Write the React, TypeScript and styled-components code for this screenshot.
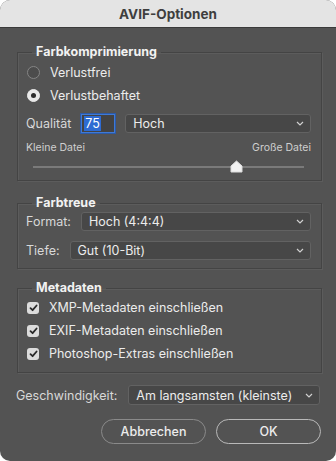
import React from "react";
import styled, { createGlobalStyle } from "styled-components";

const GlobalStyle = createGlobalStyle`
  html, body {
    margin: 0;
    padding: 0;
    background: #ffffff;
  }
  body {
    font-family: Inter, "Liberation Sans", sans-serif;
  }
`;

const Dialog = styled.div`
  width: 336px;
  height: 461px;
  background: #535353;
  border-radius: 10px;
  overflow: hidden;
  display: flex;
  flex-direction: column;
`;

const TitleBar = styled.div`
  height: 28px;
  flex: none;
  box-sizing: border-box;
  background: #e4e4e4;
  border-bottom: 1px solid #3a3a3a;
  display: flex;
  align-items: center;
  justify-content: center;
  font-size: 13.5px;
  font-weight: 700;
  color: #3e3e3e;
`;

const Body = styled.div`
  display: flex;
  flex-direction: column;
  padding-top: 16px;
`;

const Group = styled.fieldset<{ $top?: number; $bottom: number }>`
  margin: ${(p) => p.$top ?? 0}px 14px 0 17px;
  padding: 0 10px ${(p) => p.$bottom}px 8px;
  border: 1px solid #444444;
  box-shadow: inset 1px 1px 0 #5c5c5c, 1px 1px 0 #5c5c5c;
  min-width: 0;
  display: flex;
  flex-direction: column;
`;

const Legend = styled.legend`
  margin-left: 6px;
  padding: 0 4px;
  font-size: 12.5px;
  font-weight: 700;
  line-height: 16px;
  color: #f2f2f2;
`;

const OptionRow = styled.label<{ $h: number }>`
  height: ${(p) => p.$h}px;
  display: flex;
  align-items: center;
  gap: 10px;
  font-size: 12.5px;
  color: #ececec;
  padding-left: 1px;
`;

const RadioDot = styled.span<{ $on?: boolean }>`
  width: 13px;
  height: 13px;
  box-sizing: border-box;
  border-radius: 50%;
  flex: none;
  display: flex;
  align-items: center;
  justify-content: center;
  background: ${(p) => (p.$on ? "#e9e9e9" : "#4c4c4c")};
  border: 1px solid ${(p) => (p.$on ? "#e9e9e9" : "#858585")};
  &::after {
    content: "";
    width: 5px;
    height: 5px;
    border-radius: 50%;
    background: #2c2c2c;
    display: ${(p) => (p.$on ? "block" : "none")};
  }
`;

const CheckBox = styled.span`
  width: 12px;
  height: 12px;
  border-radius: 3px;
  flex: none;
  background: #dcdcdc;
  display: flex;
  align-items: center;
  justify-content: center;
`;

const FieldRow = styled.div<{ $top: number }>`
  display: flex;
  align-items: center;
  gap: 10px;
  margin-top: ${(p) => p.$top}px;
`;

const FieldLabel = styled.span`
  font-size: 12.5px;
  color: #d8d8d8;
  white-space: nowrap;
`;

const NumberBox = styled.div`
  width: 34px;
  height: 19px;
  box-sizing: border-box;
  flex: none;
  border: 1px solid #3f79d6;
  box-shadow: 0 0 0 1px #2c5aa6;
  background: #434343;
  display: flex;
  align-items: center;
  padding-left: 2px;
`;

const Selected = styled.span`
  background: #2e6bd2;
  color: #ffffff;
  font-size: 12.5px;
  line-height: 15px;
  padding: 0 1px;
`;

const SelectBox = styled.div<{ $h?: number }>`
  flex: 1;
  height: ${(p) => p.$h ?? 19}px;
  box-sizing: border-box;
  border: 1px solid #626262;
  border-radius: 3px;
  background: #474747;
  display: flex;
  align-items: center;
  justify-content: space-between;
  padding: 0 6px 0 7px;
  font-size: 12.5px;
  color: #ececec;
`;

const ScaleLabels = styled.div`
  display: flex;
  justify-content: space-between;
  margin-top: 8px;
  font-size: 10.5px;
  color: #cfcfcf;
`;

const SliderArea = styled.div`
  height: 12px;
  margin: 7px 7px 0 7px;
  display: flex;
  align-items: center;
  position: relative;
`;

const Track = styled.div`
  flex: 1;
  height: 2px;
  background: #7a7a7a;
`;

const Thumb = styled.svg`
  position: absolute;
  top: -1px;
  width: 13px;
  height: 13px;
  margin-left: -6px;
`;

const Footer = styled.div`
  display: flex;
  align-items: center;
  gap: 11px;
  margin: 12px 16px 0 16px;
`;

const ButtonRow = styled.div`
  display: flex;
  justify-content: flex-end;
  gap: 10px;
  margin: 14px 15px 0 0;
`;

const PillButton = styled.button<{ $primary?: boolean }>`
  width: 105px;
  height: 25px;
  border-radius: 13px;
  background: transparent;
  border: 1px solid ${(p) => (p.$primary ? "#b9b9b9" : "#8a8a8a")};
  color: #ececec;
  font-family: inherit;
  font-size: 12.5px;
  font-weight: 500;
  cursor: pointer;
`;

const Chevron = () => (
  <svg width="8" height="5" viewBox="0 0 8 5">
    <path d="M1 1 L4 4 L7 1" stroke="#d0d0d0" strokeWidth="1.2" fill="none" />
  </svg>
);

const Tick = () => (
  <svg width="9" height="8" viewBox="0 0 9 8">
    <path d="M1.5 4.2 L3.6 6.2 L7.6 1.5" stroke="#2a2a2a" strokeWidth="1.8" fill="none" strokeLinecap="round" strokeLinejoin="round" />
  </svg>
);

const Select: React.FC<{ value: string; h?: number }> = ({ value, h }) => (
  <SelectBox $h={h}>
    <span>{value}</span>
    <Chevron />
  </SelectBox>
);

const metadata = ["XMP-Metadaten einschließen", "EXIF-Metadaten einschließen", "Photoshop-Extras einschließen"];

const quality = 75;

export default function App() {
  return (
    <>
      <GlobalStyle />
      <Dialog>
        <TitleBar>AVIF-Optionen</TitleBar>
        <Body>
          <Group $bottom={7}>
            <Legend>Farbkomprimierung</Legend>
            <OptionRow $h={23} style={{ marginTop: 1 }}>
              <RadioDot />
              Verlustfrei
            </OptionRow>
            <OptionRow $h={23}>
              <RadioDot $on />
              Verlustbehaftet
            </OptionRow>
            <FieldRow $top={7}>
              <FieldLabel>Qualität</FieldLabel>
              <NumberBox>
                <Selected>{quality}</Selected>
              </NumberBox>
              <Select value="Hoch" />
            </FieldRow>
            <ScaleLabels>
              <span>Kleine Datei</span>
              <span>Große Datei</span>
            </ScaleLabels>
            <SliderArea>
              <Track />
              <Thumb viewBox="0 0 13 13" style={{ left: `${(quality / 100) * 100}%` }}>
                <path d="M6.5 1 L12 6 L12 12 L1 12 L1 6 Z" fill="#f2f2f2" stroke="#dcdcdc" strokeWidth="1" strokeLinejoin="round" />
              </Thumb>
            </SliderArea>
          </Group>

          <Group $top={14} $bottom={8}>
            <Legend>Farbtreue</Legend>
            <FieldRow $top={1}>
              <FieldLabel>Format:</FieldLabel>
              <Select value="Hoch (4:4:4)" />
            </FieldRow>
            <FieldRow $top={10}>
              <FieldLabel>Tiefe:</FieldLabel>
              <Select value="Gut (10-Bit)" />
            </FieldRow>
          </Group>

          <Group $top={11} $bottom={7}>
            <Legend>Metadaten</Legend>
            {metadata.map((m) => (
              <OptionRow key={m} $h={23}>
                <CheckBox>
                  <Tick />
                </CheckBox>
                {m}
              </OptionRow>
            ))}
          </Group>

          <Footer>
            <FieldLabel>Geschwindigkeit:</FieldLabel>
            <Select value="Am langsamsten (kleinste)" h={20} />
          </Footer>

          <ButtonRow>
            <PillButton>Abbrechen</PillButton>
            <PillButton $primary>OK</PillButton>
          </ButtonRow>
        </Body>
      </Dialog>
    </>
  );
}
